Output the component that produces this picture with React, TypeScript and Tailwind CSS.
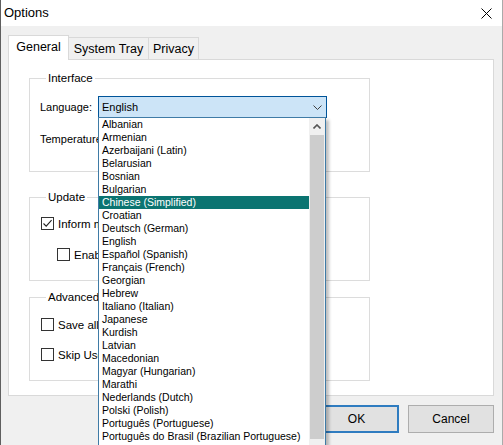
import React from "react";

const langs = [
  "Albanian",
  "Armenian",
  "Azerbaijani (Latin)",
  "Belarusian",
  "Bosnian",
  "Bulgarian",
  "Chinese (Simplified)",
  "Croatian",
  "Deutsch (German)",
  "English",
  "Español (Spanish)",
  "Français (French)",
  "Georgian",
  "Hebrew",
  "Italiano (Italian)",
  "Japanese",
  "Kurdish",
  "Latvian",
  "Macedonian",
  "Magyar (Hungarian)",
  "Marathi",
  "Nederlands (Dutch)",
  "Polski (Polish)",
  "Português (Portuguese)",
  "Português do Brasil (Brazilian Portuguese)",
];

function Check({ checked }: { checked?: boolean }) {
  return (
    <span className="w-[13px] h-[13px] border border-[#333333] bg-white flex items-center justify-center shrink-0">
      {checked && (
        <svg width="11" height="11" viewBox="0 0 11 11">
          <path d="M1.5 5.5 L4.2 8.2 L9.6 2.2" fill="none" stroke="#222222" strokeWidth="1.1" />
        </svg>
      )}
    </span>
  );
}

export default function App() {
  return (
    <div className="w-[503px] h-[445px] overflow-hidden bg-[#f0f0f0] border-l border-l-[#5f5f5f] border-r border-r-[#aaaaaa] font-['Liberation_Sans',Arial,sans-serif] text-[11.5px] text-black">
      {/* Title bar */}
      <div className="h-[26px] bg-white flex items-center justify-between pl-[3px] pr-[10px]">
        <span className="text-[13px] leading-[16px]">Options</span>
        <svg width="11" height="11" viewBox="0 0 11 11">
          <path d="M0.5 0.5 L10.5 10.5 M10.5 0.5 L0.5 10.5" stroke="#000000" strokeWidth="1" fill="none" />
        </svg>
      </div>

      <div className="pl-[7px] pr-[8px] pt-[9px]">
        {/* Tabs */}
        <div className="flex items-end h-[24px]">
          <div className="relative z-10 -mb-px h-[25px] w-[61px] bg-white border border-b-0 border-[#d9d9d9] flex items-center justify-center pb-[3px] leading-[14px] text-[12.5px]">
            General
          </div>
          <div className="h-[22px] w-[80px] bg-[#f0f0f0] border border-l-0 border-b-0 border-[#d9d9d9] flex items-center justify-center leading-[14px] text-[12.5px]">
            System Tray
          </div>
          <div className="h-[22px] w-[50px] bg-[#f0f0f0] border border-l-0 border-b-0 border-[#d9d9d9] flex items-center justify-center leading-[14px] text-[12.5px]">
            Privacy
          </div>
        </div>

        {/* Panel */}
        <div className="h-[337px] bg-white border border-[#d9d9d9] pl-[20px] pt-[11px]">
          {/* Interface */}
          <fieldset className="w-[341px] border border-[#dcdcdc] pl-[10px] pt-[11px] pb-[22px]">
            <legend className="ml-[6px] px-[2px] leading-[14px]">Interface</legend>
            <div className="flex items-center h-[22px]">
              <span className="w-[58px] leading-[14px] text-[11px]">Language:</span>
              <div className="relative w-[229px] h-[22px] bg-[#cce4f7] border border-[#005499] flex items-center justify-between pl-[3px] pr-[4px]">
                <span className="leading-[14px] text-[11px]">English</span>
                <svg width="9" height="5" viewBox="0 0 9 5">
                  <path d="M0.5 0.5 L4.5 4.5 L8.5 0.5" fill="none" stroke="#404040" strokeWidth="1" />
                </svg>

                {/* Dropdown list */}
                <div className="absolute left-[-1px] top-[20px] w-[228px] h-[340px] z-20 bg-white border border-[#3f7ba6] flex shadow-[3px_3px_3px_rgba(0,0,0,0.25)]">
                  <div className="flex-1 overflow-hidden text-[10.5px]">
                    {langs.map((l) => (
                      <div
                        key={l}
                        className={
                          l === "Chinese (Simplified)"
                            ? "h-[13px] leading-[13px] pl-[3px] whitespace-nowrap bg-[#0b7471] text-white"
                            : "h-[13px] leading-[13px] pl-[3px] whitespace-nowrap"
                        }
                      >
                        {l}
                      </div>
                    ))}
                  </div>
                  <div className="w-[16px] bg-[#f0f0f0] flex flex-col">
                    <div className="h-[17px] flex items-center justify-center">
                      <svg width="8" height="5" viewBox="0 0 8 5">
                        <path d="M0.5 4.5 L4 1 L7.5 4.5" fill="none" stroke="#555555" strokeWidth="1.6" />
                      </svg>
                    </div>
                    <div className="h-[305px] mx-[1px] bg-[#cdcdcd]" />
                    <div className="h-[17px]" />
                  </div>
                </div>
              </div>
            </div>
            <div className="flex items-center h-[20px] mt-[11px]">
              <span className="leading-[14px] whitespace-nowrap text-[11px]">Temperature unit:</span>
            </div>
          </fieldset>

          {/* Update */}
          <fieldset className="w-[341px] mt-[18px] border border-[#dcdcdc] pl-[11px] pt-[13px] pb-[19px]">
            <legend className="ml-[5px] px-[2px] leading-[14px]">Update</legend>
            <div className="flex items-center h-[13px] gap-[4px]">
              <Check checked />
              <span className="leading-[14px] whitespace-nowrap">Inform me about new versions</span>
            </div>
            <div className="flex items-center h-[13px] gap-[4px] mt-[18px] ml-[16px]">
              <Check />
              <span className="leading-[14px] whitespace-nowrap">Enable beta versions</span>
            </div>
          </fieldset>

          {/* Advanced */}
          <fieldset className="w-[341px] mt-[9px] border border-[#dcdcdc] pl-[11px] pt-[14px] pb-[19px]">
            <legend className="ml-[5px] px-[2px] leading-[14px]">Advanced</legend>
            <div className="flex items-center h-[13px] gap-[4px]">
              <Check />
              <span className="leading-[14px] whitespace-nowrap">Save all settings to file</span>
            </div>
            <div className="flex items-center h-[13px] gap-[4px] mt-[17px]">
              <Check />
              <span className="leading-[14px] whitespace-nowrap">Skip User Account Control</span>
            </div>
          </fieldset>
        </div>

        {/* Buttons */}
        <div className="flex justify-end gap-[9px] mt-[9px]">
          <button className="w-[85px] h-[28px] bg-[#e1e1e1] border-2 border-[#2f7cc0] leading-[14px] text-[12px]">
            OK
          </button>
          <button className="w-[86px] h-[28px] bg-[#e1e1e1] border border-[#adadad] leading-[14px] text-[12px]">
            Cancel
          </button>
        </div>
      </div>
    </div>
  );
}
